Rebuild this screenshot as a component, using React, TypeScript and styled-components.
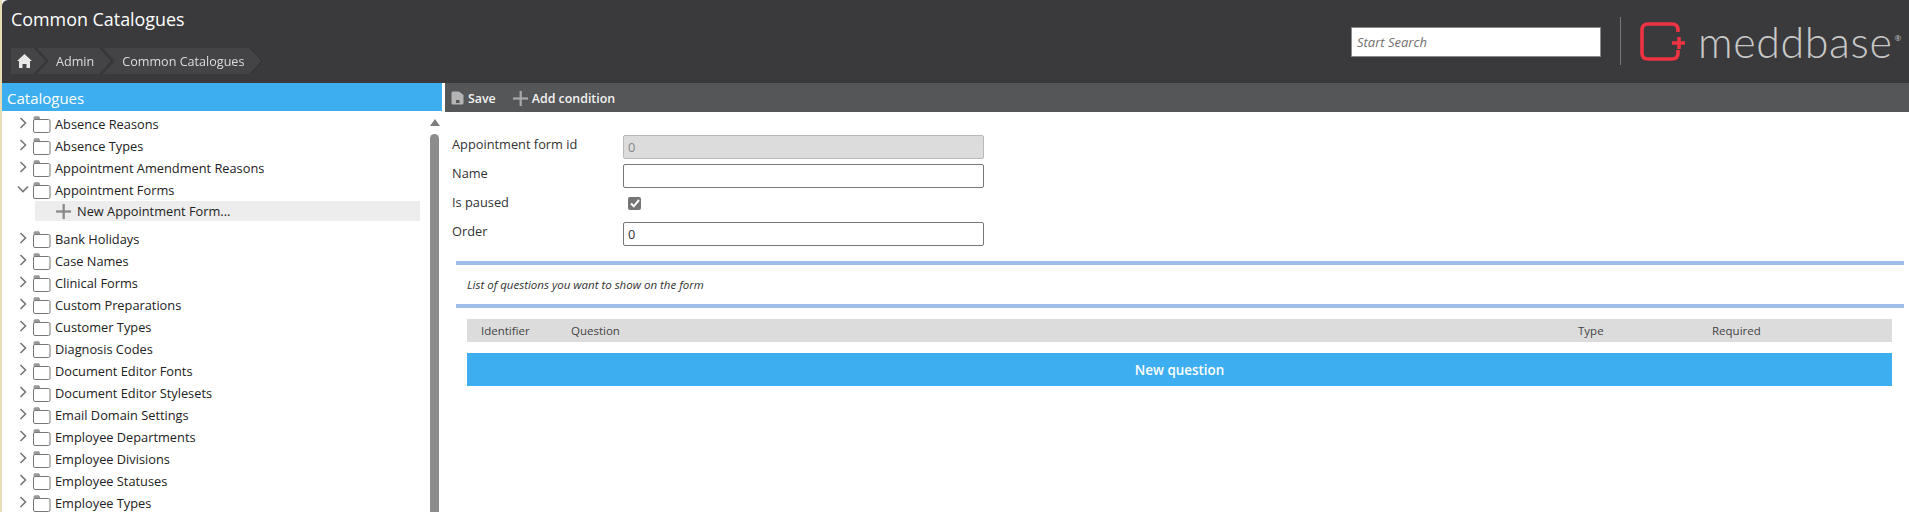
import React from "react";
import styled, { createGlobalStyle } from "styled-components";

const Global = createGlobalStyle`
  html, body { margin: 0; padding: 0; background: #fff; }
  body { font-family: "Open Sans", "Noto Sans", sans-serif; font-size: 12.8px; color: #222; }
  #root { height: 512px; overflow: hidden; }
  * { box-sizing: border-box; }
`;

const Page = styled.div`
  height: 512px;
  background: #fff;
  display: flex;
  flex-direction: column;
  overflow: hidden;
  position: relative;
  border-left: 2px solid #e8dcb4;
`;
const Header = styled.header`
  height: 83px;
  flex: none;
  background: #3a3a3c;
  border-top-left-radius: 6px;
  padding: 0 0 0 9px;
  display: flex;
  justify-content: space-between;
`;
const HeaderLeft = styled.div`
  display: flex;
  flex-direction: column;
`;
const Title = styled.h1`
  margin: 7px 0 0;
  font-size: 17.9px;
  line-height: 24px;
  font-weight: 400;
  color: #fff;
`;
const Crumbs = styled.nav`
  display: flex;
  margin-top: 17px;
`;
const CrumbItem = styled.div<{ $pull?: number }>`
  margin-left: ${(p) => p.$pull ?? 0}px;
  filter: drop-shadow(1.5px 0 0 #303032);
`;
const Crumb = styled.a<{ $first?: boolean }>`
  height: 26px;
  display: flex;
  align-items: center;
  background: #444446;
  color: #dcdcdc;
  font-size: 12.6px;
  padding: ${(p) => (p.$first ? "0 14px 0 6px" : "0 17px 0 19px")};
  clip-path: ${(p) =>
    p.$first
      ? "polygon(0 0, calc(100% - 12px) 0, 100% 50%, calc(100% - 12px) 100%, 0 100%)"
      : "polygon(0 0, calc(100% - 12px) 0, 100% 50%, calc(100% - 12px) 100%, 0 100%, 12px 50%)"};
`;
const HeaderRight = styled.div`
  display: flex;
  align-items: flex-start;
`;
const Search = styled.input`
  width: 250px;
  height: 30px;
  margin-top: 27px;
  border: 1px solid #8a8a8a;
  background: #fff;
  padding: 0 5px;
  font: italic 13px "Open Sans", sans-serif;
  color: #666;
  &::placeholder { color: #6f6f6f; opacity: 1; }
`;
const Divider = styled.div`
  width: 1px;
  height: 48px;
  margin: 17px 19px 0 19px;
  background: #77787a;
`;
const Logo = styled.div`
  display: flex;
  align-items: flex-start;
  width: 269px;
  padding-top: 22px;
`;
const LogoWord = styled.span`
  font-family: "Lato", sans-serif;
  font-weight: 300;
  font-size: 43px;
  line-height: 44px;
  letter-spacing: 0.6px;
  color: #c8c8c8;
  margin-left: 12px;
  margin-top: -2px;
`;
const Reg = styled.span`
  font-size: 8px;
  line-height: 10px;
  color: #c8c8c8;
  margin: 11px 0 0 2px;
`;

const Body = styled.div`
  flex: 1;
  display: flex;
  min-height: 0;
`;
const Sidebar = styled.aside`
  width: 440px;
  flex: none;
  display: flex;
  flex-direction: column;
  position: relative;
  overflow: hidden;
`;
const SideTitle = styled.div`
  height: 28px;
  flex: none;
  background: #3daef0;
  color: #fff;
  font-size: 15px;
  line-height: 30px;
  padding-left: 5px;
`;
const Tree = styled.ul`
  list-style: none;
  margin: 0;
  padding: 2px 0 0;
`;
const Row = styled.li<{ $after?: boolean }>`
  height: 22px;
  display: flex;
  align-items: center;
  padding-left: 15px;
  font-size: 12.8px;
  color: #222;
  margin-top: ${(p) => (p.$after ? "7px" : "0")};
  span { margin-left: 4px; }
`;
const Chevron = styled.svg`
  width: 12px;
  height: 12px;
  flex: none;
  margin-top: -3px;
`;
const Folder = styled.svg`
  width: 18px;
  height: 17px;
  flex: none;
  margin: 0 0 0 4px;
`;
const NewRow = styled.li`
  height: 20px;
  margin: 0 22px 0 33px;
  background: #ededed;
  display: flex;
  align-items: center;
  padding-left: 21px;
  font-size: 12.8px;
  color: #222;
  span { margin-left: 6px; }
`;
const ScrollUp = styled.div`
  position: absolute;
  right: 2px;
  top: 36px;
  width: 0;
  height: 0;
  border-left: 5px solid transparent;
  border-right: 5px solid transparent;
  border-bottom: 7px solid #7d7d7d;
`;
const ScrollThumb = styled.div`
  position: absolute;
  right: 3px;
  top: 51px;
  bottom: -20px;
  width: 9px;
  border-radius: 5px 5px 0 0;
  background: #8c8c8c;
`;

const Main = styled.main`
  flex: 1;
  margin-left: 3px;
  min-width: 0;
  display: flex;
  flex-direction: column;
`;
const Toolbar = styled.div`
  height: 29px;
  flex: none;
  background: #555658;
  display: flex;
  align-items: center;
  padding: 1px 0 0 6px;
  gap: 17px;
`;
const ToolButton = styled.button`
  display: flex;
  align-items: center;
  gap: 4px;
  padding: 0;
  border: 0;
  background: none;
  color: #f2f2f2;
  font: 600 12.4px "Open Sans", sans-serif;
`;
const Form = styled.div`
  padding: 23px 0 0 7px;
  width: 540px;
`;
const FormRow = styled.label<{ $h: number }>`
  display: grid;
  grid-template-columns: 171px 361px;
  align-items: start;
  height: ${(p) => p.$h}px;
  font-size: 12.8px;
  line-height: 18px;
  color: #333;
`;
const Field = styled.input<{ $off?: boolean }>`
  width: 361px;
  height: 24px;
  padding: 0 4px;
  border-radius: 2px;
  border: 1px solid ${(p) => (p.$off ? "#b8b8b8" : "#777")};
  background: ${(p) => (p.$off ? "#dcdcdc" : "#fff")};
  color: ${(p) => (p.$off ? "#888" : "#333")};
  font: 12.8px "Open Sans", sans-serif;
  outline: none;
`;
const Check = styled.div`
  width: 13px;
  height: 13px;
  margin: 4px 0 0 5px;
  border-radius: 2px;
  background: #757575;
  display: flex;
  align-items: center;
  justify-content: center;
`;
const Section = styled.div`
  margin: 15px 5px 0 11px;
  height: 47px;
  border-top: 4px solid #a0bfe8;
  border-bottom: 4px solid #a0bfe8;
  padding-left: 11px;
  font-style: italic;
  font-size: 11.5px;
  line-height: 40px;
  color: #333;
`;
const Table = styled.div`
  margin: 11px 17px 0 22px;
`;
const HeadRow = styled.div`
  height: 23px;
  background: #dcdcdc;
  display: grid;
  grid-template-columns: 90px 1007px 134px 1fr;
  align-items: center;
  padding-left: 14px;
  font-size: 11.5px;
  color: #444;
`;
const NewButton = styled.button`
  display: block;
  width: 100%;
  height: 33px;
  margin-top: 11px;
  border: 0;
  background: #3daef0;
  color: #fff;
  font: 600 13.4px "Open Sans", sans-serif;
`;

const Arrow = ({ open }: { open?: boolean }) => (
  <Chevron viewBox="0 0 12 12" fill="none" stroke="#777" strokeWidth="1.6">
    <path d={open ? "M1 3.5 L6 8.5 L11 3.5" : "M3.5 1 L8.5 6 L3.5 11"} />
  </Chevron>
);
const FolderIcon = () => (
  <Folder viewBox="0 0 18 17" fill="#fff" stroke="#777" strokeWidth="1">
    <path d="M1 3.5 V1.5 Q1 .8 1.7 .8 H6 L7 3.5" fill="#999" stroke="#999" />
    <rect x="0.5" y="3.5" width="16.5" height="13" rx="1.5" />
  </Folder>
);
const Plus = ({ size, color }: { size: number; color: string }) => (
  <svg width={size} height={size} viewBox="0 0 16 16" fill={color}>
    <rect x="7" y="0" width="2.400" height="16" />
    <rect x="0" y="6.800" width="16" height="2.400" />
  </svg>
);
const SaveIcon = () => (
  <svg width="13" height="14" viewBox="0 0 13 14">
    <path d="M2 0.5 H8 L12.500 4 V12 Q12.500 13.500 11 13.500 H2 Q.5 13.500 .5 12 V2 Q.5 .5 2 .5 Z" fill="#b5b5b5" />
    <rect x="5" y="9" width="3.500" height="3" fill="#555658" />
  </svg>
);
const HomeIcon = () => (
  <svg width="15" height="14" viewBox="0 0 15 14" fill="#e8e8e8">
    <path d="M7.5 0 L15 7 H13 V14 H9.5 V10 H5.5 V14 H2 V7 H0 Z" />
  </svg>
);

const first = ["Absence Reasons", "Absence Types", "Appointment Amendment Reasons"];
const rest = [
  "Case Names", "Clinical Forms", "Custom Preparations", "Customer Types", "Diagnosis Codes",
  "Document Editor Fonts", "Document Editor Stylesets", "Email Domain Settings",
  "Employee Departments", "Employee Divisions", "Employee Statuses", "Employee Types",
];

export default function App() {
  return (
    <Page>
      <Global />
      <Header>
        <HeaderLeft>
          <Title>Common Catalogues</Title>
          <Crumbs>
            <CrumbItem><Crumb $first><HomeIcon /></Crumb></CrumbItem>
            <CrumbItem $pull={-9}><Crumb>Admin</Crumb></CrumbItem>
            <CrumbItem $pull={-8}><Crumb>Common Catalogues</Crumb></CrumbItem>
          </Crumbs>
        </HeaderLeft>
        <HeaderRight>
          <Search placeholder="Start Search" />
          <Divider />
          <Logo>
            <svg width="46" height="40" viewBox="0 0 46 40" fill="none" stroke="#ee3342" strokeWidth="3.6">
              <path d="M38 10 V8 Q38 2 32 2 H8 Q2 2 2 8 V31 Q2 37 8 37 H32 Q38 37 38 31 V28" />
              <path d="M32 21 H45 M39 15 V27" />
            </svg>
            <LogoWord>meddbase</LogoWord>
            <Reg>®</Reg>
          </Logo>
        </HeaderRight>
      </Header>
      <Body>
        <Sidebar>
          <SideTitle>Catalogues</SideTitle>
          <Tree>
            {first.map((t) => (
              <Row key={t}><Arrow /><FolderIcon /><span>{t}</span></Row>
            ))}
            <Row><Arrow open /><FolderIcon /><span>Appointment Forms</span></Row>
            <NewRow><Plus size={15} color="#888" /><span>New Appointment Form...</span></NewRow>
            <Row $after><Arrow /><FolderIcon /><span>Bank Holidays</span></Row>
            {rest.map((t) => (
              <Row key={t}><Arrow /><FolderIcon /><span>{t}</span></Row>
            ))}
          </Tree>
          <ScrollUp />
          <ScrollThumb />
        </Sidebar>
        <Main>
          <Toolbar>
            <ToolButton><SaveIcon />Save</ToolButton>
            <ToolButton><Plus size={15} color="#a8a8a8" />Add condition</ToolButton>
          </Toolbar>
          <Form>
            <FormRow $h={29}>Appointment form id<Field $off readOnly value="0" /></FormRow>
            <FormRow $h={29}>Name<Field readOnly value="" /></FormRow>
            <FormRow $h={29}>
              Is paused
              <Check>
                <svg width="10" height="9" viewBox="0 0 10 9" fill="none" stroke="#fff" strokeWidth="2">
                  <path d="M1 4.500 L3.800 7.300 L9 1" />
                </svg>
              </Check>
            </FormRow>
            <FormRow $h={24}>Order<Field readOnly value="0" /></FormRow>
          </Form>
          <Section>List of questions you want to show on the form</Section>
          <Table>
            <HeadRow>
              <span>Identifier</span>
              <span>Question</span>
              <span>Type</span>
              <span>Required</span>
            </HeadRow>
            <NewButton>New question</NewButton>
          </Table>
        </Main>
      </Body>
    </Page>
  );
}
